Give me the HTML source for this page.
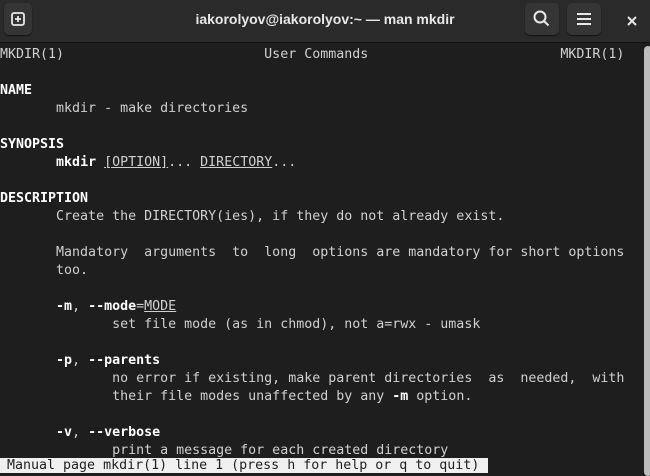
<!DOCTYPE html>
<html><head><meta charset="utf-8"><style>
html,body{margin:0;padding:0;width:650px;height:473px;overflow:hidden;background:#1e1e1e}
.tb{position:absolute;left:0;top:0;width:650px;height:42px;background:#2a2a2a;border-bottom:1px solid #111}
.title{position:absolute;left:0;right:0;top:11px;text-align:center;color:#e8e8e8;font:bold 14px "Liberation Sans",sans-serif}
.btn{position:absolute;top:3px;width:34px;height:32px;background:#353535;border-radius:5px;box-shadow:0 1px 1px #111}
.term{position:absolute;left:0;top:46px;font-family:"DejaVu Sans Mono","Liberation Mono",monospace;font-size:13.3px;line-height:18px;color:#d0d0d0;white-space:pre}
b{color:#fff}
u{text-decoration:underline}
.sb{position:absolute;left:644px;top:46px;width:8px;height:430px;background:#bdbdbd;border-radius:4px}
.st{position:absolute;left:0;top:458px;width:488px;height:15px;background:#f0f0f0;color:#1e1e1e;font-family:"DejaVu Sans Mono","Liberation Mono",monospace;font-size:13.3px;line-height:16px;white-space:pre;padding-left:7px;box-sizing:border-box}
</style></head><body>
<div class="tb">
<div class="btn" style="left:4px;width:28px"><svg width="28" height="32"><rect x="8" y="10" width="12" height="12" rx="2" fill="none" stroke="#e8e8e8" stroke-width="1.8"/><path d="M14 13v6M11 16h6" stroke="#e8e8e8" stroke-width="1.8"/></svg></div>
<div class="title">iakorolyov@iakorolyov:~ — man mkdir</div>
<div class="btn" style="left:525px"><svg width="34" height="32"><circle cx="15" cy="14" r="5.5" fill="none" stroke="#e8e8e8" stroke-width="2"/><path d="M19 18l4.5 4.5" stroke="#e8e8e8" stroke-width="2"/></svg></div>
<div class="btn" style="left:567px"><svg width="34" height="32"><path d="M10 11h14M10 16h14M10 21h14" stroke="#e8e8e8" stroke-width="2"/></svg></div>
<svg style="position:absolute;left:625px;top:14px" width="14" height="14"><path d="M3 3l8 8M11 3l-8 8" stroke="#e8e8e8" stroke-width="2"/></svg>
</div>
<div class="term">MKDIR(1)                         User Commands                        MKDIR(1)

<b>NAME</b>
       mkdir - make directories

<b>SYNOPSIS</b>
       <b>mkdir</b> <u>[OPTION]</u>... <u>DIRECTORY</u>...

<b>DESCRIPTION</b>
       Create the DIRECTORY(ies), if they do not already exist.

       Mandatory  arguments  to  long  options are mandatory for short options
       too.

       <b>-m</b>, <b>--mode</b>=<u>MODE</u>
              set file mode (as in chmod), not a=rwx - umask

       <b>-p</b>, <b>--parents</b>
              no error if existing, make parent directories  as  needed,  with
              their file modes unaffected by any <b>-m</b> option.

       <b>-v</b>, <b>--verbose</b>
              print a message for each created directory</div>
<div class="sb"></div>
<div class="st">Manual page mkdir(1) line 1 (press h for help or q to quit)</div>
</body></html>
